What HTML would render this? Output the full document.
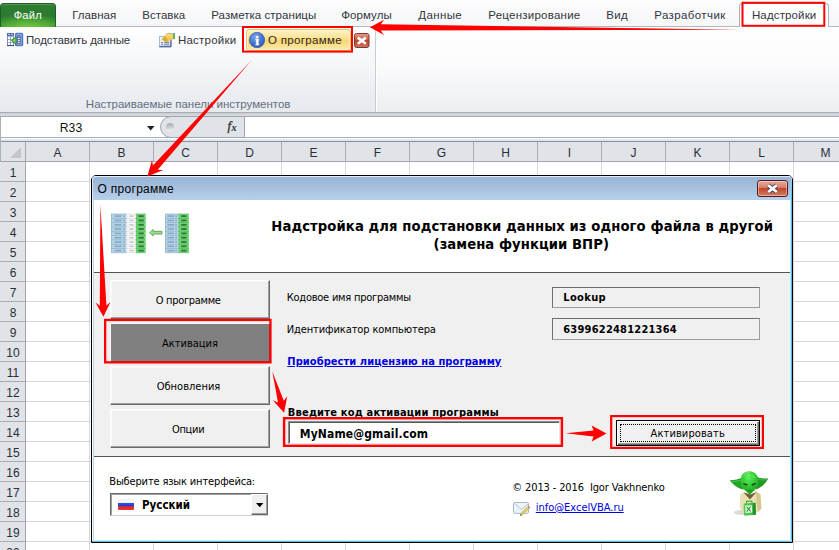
<!DOCTYPE html>
<html lang="ru"><head><meta charset="utf-8"><title>О программе</title><style>
*{box-sizing:border-box}
html,body{margin:0;padding:0}
body{width:839px;height:550px;overflow:hidden;background:#fff;position:relative;font-family:"Liberation Sans",sans-serif}
.a{position:absolute}
.t{position:absolute;white-space:pre;display:block}
.grp{position:absolute;left:0;top:0;width:0;height:0}
</style></head><body>
<div class="grp" id="grid">
<div class="a" style="left:0;top:141px;width:839px;height:1px;background:#8e9298"></div>
<div class="a" style="left:0;top:142px;width:839px;height:19px;background:#e0e3e7"></div>
<div class="a" style="left:0;top:161px;width:839px;height:1px;background:#a3a7ad"></div>
<div class="a" style="left:0;top:162px;width:25px;height:388px;background:#e0e3e7"></div>
<div class="a" style="left:25px;top:142px;width:1px;height:408px;background:#a3a7ad"></div>
<svg class="a" style="left:9px;top:147px" width="13" height="12" viewBox="0 0 13 12"><path d="M12 0v11H1z" fill="#c3c7cc"/></svg>
<div class="a" style="left:89px;top:142px;width:1px;height:19px;background:#a8acb2"></div>
<div class="a" style="left:89px;top:162px;width:1px;height:388px;background:#d5d7da"></div>
<span class="t" style='left:53.49px;top:145.00px;font:normal 12px/16px "Liberation Sans", sans-serif;color:#2a2f36;letter-spacing:0.000px;'>A</span>
<div class="a" style="left:153px;top:142px;width:1px;height:19px;background:#a8acb2"></div>
<div class="a" style="left:153px;top:162px;width:1px;height:388px;background:#d5d7da"></div>
<span class="t" style='left:117.49px;top:145.00px;font:normal 12px/16px "Liberation Sans", sans-serif;color:#2a2f36;letter-spacing:0.000px;'>B</span>
<div class="a" style="left:217px;top:142px;width:1px;height:19px;background:#a8acb2"></div>
<div class="a" style="left:217px;top:162px;width:1px;height:388px;background:#d5d7da"></div>
<span class="t" style='left:181.16px;top:145.00px;font:normal 12px/16px "Liberation Sans", sans-serif;color:#2a2f36;letter-spacing:0.000px;'>C</span>
<div class="a" style="left:281px;top:142px;width:1px;height:19px;background:#a8acb2"></div>
<div class="a" style="left:281px;top:162px;width:1px;height:388px;background:#d5d7da"></div>
<span class="t" style='left:245.16px;top:145.00px;font:normal 12px/16px "Liberation Sans", sans-serif;color:#2a2f36;letter-spacing:0.000px;'>D</span>
<div class="a" style="left:345px;top:142px;width:1px;height:19px;background:#a8acb2"></div>
<div class="a" style="left:345px;top:162px;width:1px;height:388px;background:#d5d7da"></div>
<span class="t" style='left:309.49px;top:145.00px;font:normal 12px/16px "Liberation Sans", sans-serif;color:#2a2f36;letter-spacing:0.000px;'>E</span>
<div class="a" style="left:409px;top:142px;width:1px;height:19px;background:#a8acb2"></div>
<div class="a" style="left:409px;top:162px;width:1px;height:388px;background:#d5d7da"></div>
<span class="t" style='left:373.83px;top:145.00px;font:normal 12px/16px "Liberation Sans", sans-serif;color:#2a2f36;letter-spacing:0.000px;'>F</span>
<div class="a" style="left:473px;top:142px;width:1px;height:19px;background:#a8acb2"></div>
<div class="a" style="left:473px;top:162px;width:1px;height:388px;background:#d5d7da"></div>
<span class="t" style='left:436.83px;top:145.00px;font:normal 12px/16px "Liberation Sans", sans-serif;color:#2a2f36;letter-spacing:0.000px;'>G</span>
<div class="a" style="left:537px;top:142px;width:1px;height:19px;background:#a8acb2"></div>
<div class="a" style="left:537px;top:162px;width:1px;height:388px;background:#d5d7da"></div>
<span class="t" style='left:501.16px;top:145.00px;font:normal 12px/16px "Liberation Sans", sans-serif;color:#2a2f36;letter-spacing:0.000px;'>H</span>
<div class="a" style="left:601px;top:142px;width:1px;height:19px;background:#a8acb2"></div>
<div class="a" style="left:601px;top:162px;width:1px;height:388px;background:#d5d7da"></div>
<span class="t" style='left:567.83px;top:145.00px;font:normal 12px/16px "Liberation Sans", sans-serif;color:#2a2f36;letter-spacing:0.000px;'>I</span>
<div class="a" style="left:665px;top:142px;width:1px;height:19px;background:#a8acb2"></div>
<div class="a" style="left:665px;top:162px;width:1px;height:388px;background:#d5d7da"></div>
<span class="t" style='left:630.50px;top:145.00px;font:normal 12px/16px "Liberation Sans", sans-serif;color:#2a2f36;letter-spacing:0.000px;'>J</span>
<div class="a" style="left:729px;top:142px;width:1px;height:19px;background:#a8acb2"></div>
<div class="a" style="left:729px;top:162px;width:1px;height:388px;background:#d5d7da"></div>
<span class="t" style='left:693.49px;top:145.00px;font:normal 12px/16px "Liberation Sans", sans-serif;color:#2a2f36;letter-spacing:0.000px;'>K</span>
<div class="a" style="left:793px;top:142px;width:1px;height:19px;background:#a8acb2"></div>
<div class="a" style="left:793px;top:162px;width:1px;height:388px;background:#d5d7da"></div>
<span class="t" style='left:758.16px;top:145.00px;font:normal 12px/16px "Liberation Sans", sans-serif;color:#2a2f36;letter-spacing:0.000px;'>L</span>
<div class="a" style="left:857px;top:142px;width:1px;height:19px;background:#a8acb2"></div>
<div class="a" style="left:857px;top:162px;width:1px;height:388px;background:#d5d7da"></div>
<span class="t" style='left:820.50px;top:145.00px;font:normal 12px/16px "Liberation Sans", sans-serif;color:#2a2f36;letter-spacing:0.000px;'>M</span>
<div class="a" style="left:26px;top:181px;width:813px;height:1px;background:#d5d7da"></div>
<div class="a" style="left:0;top:181px;width:25px;height:1px;background:#a8acb2"></div>
<span class="t" style='left:9.66px;top:165.00px;font:normal 12px/16px "Liberation Sans", sans-serif;color:#2a2f36;letter-spacing:0.000px;'>1</span>
<div class="a" style="left:26px;top:201px;width:813px;height:1px;background:#d5d7da"></div>
<div class="a" style="left:0;top:201px;width:25px;height:1px;background:#a8acb2"></div>
<span class="t" style='left:9.66px;top:185.00px;font:normal 12px/16px "Liberation Sans", sans-serif;color:#2a2f36;letter-spacing:0.000px;'>2</span>
<div class="a" style="left:26px;top:221px;width:813px;height:1px;background:#d5d7da"></div>
<div class="a" style="left:0;top:221px;width:25px;height:1px;background:#a8acb2"></div>
<span class="t" style='left:9.66px;top:205.00px;font:normal 12px/16px "Liberation Sans", sans-serif;color:#2a2f36;letter-spacing:0.000px;'>3</span>
<div class="a" style="left:26px;top:241px;width:813px;height:1px;background:#d5d7da"></div>
<div class="a" style="left:0;top:241px;width:25px;height:1px;background:#a8acb2"></div>
<span class="t" style='left:9.66px;top:225.00px;font:normal 12px/16px "Liberation Sans", sans-serif;color:#2a2f36;letter-spacing:0.000px;'>4</span>
<div class="a" style="left:26px;top:261px;width:813px;height:1px;background:#d5d7da"></div>
<div class="a" style="left:0;top:261px;width:25px;height:1px;background:#a8acb2"></div>
<span class="t" style='left:9.66px;top:245.00px;font:normal 12px/16px "Liberation Sans", sans-serif;color:#2a2f36;letter-spacing:0.000px;'>5</span>
<div class="a" style="left:26px;top:281px;width:813px;height:1px;background:#d5d7da"></div>
<div class="a" style="left:0;top:281px;width:25px;height:1px;background:#a8acb2"></div>
<span class="t" style='left:9.66px;top:265.00px;font:normal 12px/16px "Liberation Sans", sans-serif;color:#2a2f36;letter-spacing:0.000px;'>6</span>
<div class="a" style="left:26px;top:301px;width:813px;height:1px;background:#d5d7da"></div>
<div class="a" style="left:0;top:301px;width:25px;height:1px;background:#a8acb2"></div>
<span class="t" style='left:9.66px;top:285.00px;font:normal 12px/16px "Liberation Sans", sans-serif;color:#2a2f36;letter-spacing:0.000px;'>7</span>
<div class="a" style="left:26px;top:321px;width:813px;height:1px;background:#d5d7da"></div>
<div class="a" style="left:0;top:321px;width:25px;height:1px;background:#a8acb2"></div>
<span class="t" style='left:9.66px;top:305.00px;font:normal 12px/16px "Liberation Sans", sans-serif;color:#2a2f36;letter-spacing:0.000px;'>8</span>
<div class="a" style="left:26px;top:341px;width:813px;height:1px;background:#d5d7da"></div>
<div class="a" style="left:0;top:341px;width:25px;height:1px;background:#a8acb2"></div>
<span class="t" style='left:9.66px;top:325.00px;font:normal 12px/16px "Liberation Sans", sans-serif;color:#2a2f36;letter-spacing:0.000px;'>9</span>
<div class="a" style="left:26px;top:361px;width:813px;height:1px;background:#d5d7da"></div>
<div class="a" style="left:0;top:361px;width:25px;height:1px;background:#a8acb2"></div>
<span class="t" style='left:6.32px;top:345.00px;font:normal 12px/16px "Liberation Sans", sans-serif;color:#2a2f36;letter-spacing:0.000px;'>10</span>
<div class="a" style="left:26px;top:381px;width:813px;height:1px;background:#d5d7da"></div>
<div class="a" style="left:0;top:381px;width:25px;height:1px;background:#a8acb2"></div>
<span class="t" style='left:6.77px;top:365.00px;font:normal 12px/16px "Liberation Sans", sans-serif;color:#2a2f36;letter-spacing:0.000px;'>11</span>
<div class="a" style="left:26px;top:401px;width:813px;height:1px;background:#d5d7da"></div>
<div class="a" style="left:0;top:401px;width:25px;height:1px;background:#a8acb2"></div>
<span class="t" style='left:6.32px;top:385.00px;font:normal 12px/16px "Liberation Sans", sans-serif;color:#2a2f36;letter-spacing:0.000px;'>12</span>
<div class="a" style="left:26px;top:421px;width:813px;height:1px;background:#d5d7da"></div>
<div class="a" style="left:0;top:421px;width:25px;height:1px;background:#a8acb2"></div>
<span class="t" style='left:6.32px;top:405.00px;font:normal 12px/16px "Liberation Sans", sans-serif;color:#2a2f36;letter-spacing:0.000px;'>13</span>
<div class="a" style="left:26px;top:441px;width:813px;height:1px;background:#d5d7da"></div>
<div class="a" style="left:0;top:441px;width:25px;height:1px;background:#a8acb2"></div>
<span class="t" style='left:6.32px;top:425.00px;font:normal 12px/16px "Liberation Sans", sans-serif;color:#2a2f36;letter-spacing:0.000px;'>14</span>
<div class="a" style="left:26px;top:461px;width:813px;height:1px;background:#d5d7da"></div>
<div class="a" style="left:0;top:461px;width:25px;height:1px;background:#a8acb2"></div>
<span class="t" style='left:6.32px;top:445.00px;font:normal 12px/16px "Liberation Sans", sans-serif;color:#2a2f36;letter-spacing:0.000px;'>15</span>
<div class="a" style="left:26px;top:481px;width:813px;height:1px;background:#d5d7da"></div>
<div class="a" style="left:0;top:481px;width:25px;height:1px;background:#a8acb2"></div>
<span class="t" style='left:6.32px;top:465.00px;font:normal 12px/16px "Liberation Sans", sans-serif;color:#2a2f36;letter-spacing:0.000px;'>16</span>
<div class="a" style="left:26px;top:501px;width:813px;height:1px;background:#d5d7da"></div>
<div class="a" style="left:0;top:501px;width:25px;height:1px;background:#a8acb2"></div>
<span class="t" style='left:6.32px;top:485.00px;font:normal 12px/16px "Liberation Sans", sans-serif;color:#2a2f36;letter-spacing:0.000px;'>17</span>
<div class="a" style="left:26px;top:521px;width:813px;height:1px;background:#d5d7da"></div>
<div class="a" style="left:0;top:521px;width:25px;height:1px;background:#a8acb2"></div>
<span class="t" style='left:6.32px;top:505.00px;font:normal 12px/16px "Liberation Sans", sans-serif;color:#2a2f36;letter-spacing:0.000px;'>18</span>
<div class="a" style="left:26px;top:541px;width:813px;height:1px;background:#d5d7da"></div>
<div class="a" style="left:0;top:541px;width:25px;height:1px;background:#a8acb2"></div>
<span class="t" style='left:6.32px;top:525.00px;font:normal 12px/16px "Liberation Sans", sans-serif;color:#2a2f36;letter-spacing:0.000px;'>19</span>
<div class="a" style="left:26px;top:561px;width:813px;height:1px;background:#d5d7da"></div>
<div class="a" style="left:0;top:561px;width:25px;height:1px;background:#a8acb2"></div>
<span class="t" style='left:6.32px;top:545.00px;font:normal 12px/16px "Liberation Sans", sans-serif;color:#2a2f36;letter-spacing:0.000px;'>20</span>
</div>
<div class="grp" id="ribbon">
<div class="a" style="left:0;top:0;width:839px;height:27px;background:linear-gradient(#fcfcfd,#f5f6f8)"></div>
<div class="a" style="left:0;top:27px;width:839px;height:85px;background:linear-gradient(#ffffff 0%,#fbfbfc 45%,#eceef1 100%)"></div>
<div class="a" style="left:0;top:27px;width:376px;height:85px;background:linear-gradient(rgba(230,233,238,0) 0%,rgba(226,230,236,.55) 100%);border-right:1px solid #c9cdd3"></div>
<div class="a" style="left:376px;top:29px;width:1px;height:82px;background:#fff"></div>
<div class="a" style="left:0;top:26px;width:839px;height:1px;background:#b3b8be"></div>
<div class="a" style="left:0;top:112px;width:839px;height:1px;background:#a9adb3"></div>
<div class="a" style="left:0;top:113px;width:839px;height:3px;background:linear-gradient(#c9ccd1,#d9dce0)"></div>
<div class="a" style="left:0;top:3px;width:56px;height:24px;border:1px solid #1e5d24;border-bottom:none;border-radius:4px 4px 0 0;background:radial-gradient(ellipse 75% 70% at 50% 112%,#74cf3e 0%,rgba(110,200,60,.75) 40%,rgba(90,180,50,0) 100%),linear-gradient(#2f8033 0%,#2b7a2f 50%,#35902f 100%);box-shadow:inset 0 1px 0 rgba(255,255,255,.18)"></div>
<span class="t" style='left:13.67px;top:7.00px;font:normal 11.2px/16px "Liberation Sans", sans-serif;color:#fff;letter-spacing:0.180px;'>Файл</span>
<span class="t" style='left:72.25px;top:7.00px;font:normal 11.5px/16px "Liberation Sans", sans-serif;color:#33363d;letter-spacing:0.036px;'>Главная</span>
<span class="t" style='left:142.25px;top:7.00px;font:normal 11.5px/16px "Liberation Sans", sans-serif;color:#33363d;letter-spacing:0.041px;'>Вставка</span>
<span class="t" style='left:211.25px;top:7.00px;font:normal 11.5px/16px "Liberation Sans", sans-serif;color:#33363d;letter-spacing:0.042px;'>Разметка страницы</span>
<span class="t" style='left:341.25px;top:7.00px;font:normal 11.5px/16px "Liberation Sans", sans-serif;color:#33363d;letter-spacing:0.075px;'>Формулы</span>
<span class="t" style='left:418.25px;top:7.00px;font:normal 11.5px/16px "Liberation Sans", sans-serif;color:#33363d;letter-spacing:0.386px;'>Данные</span>
<span class="t" style='left:488.25px;top:7.00px;font:normal 11.5px/16px "Liberation Sans", sans-serif;color:#33363d;letter-spacing:0.245px;'>Рецензирование</span>
<span class="t" style='left:606.25px;top:7.00px;font:normal 11.5px/16px "Liberation Sans", sans-serif;color:#33363d;letter-spacing:0.341px;'>Вид</span>
<span class="t" style='left:654.25px;top:7.00px;font:normal 11.5px/16px "Liberation Sans", sans-serif;color:#33363d;letter-spacing:0.392px;'>Разработчик</span>
<div class="a" style="left:739px;top:3px;width:90px;height:24px;border:1px solid #aab0b8;border-bottom:none;border-radius:4px 4px 0 0;background:#fff"></div>
<span class="t" style='left:751.95px;top:7.00px;font:normal 11.5px/16px "Liberation Sans", sans-serif;color:#33363d;letter-spacing:0.132px;'>Надстройки</span>
<span class="t" style='left:25.95px;top:32.00px;font:normal 11.5px/16px "Liberation Sans", sans-serif;color:#33363d;letter-spacing:-0.098px;'>Подставить данные</span>
<span class="t" style='left:177.95px;top:32.00px;font:normal 11.5px/16px "Liberation Sans", sans-serif;color:#33363d;letter-spacing:0.238px;'>Настройки</span>
<div class="a" style="left:246px;top:29px;width:104.500px;height:21.500px;border:1px solid #e9c35c;border-radius:3px;background:linear-gradient(#fdf2c6 0%,#fce397 38%,#fbd66e 55%,#fdebac 100%);box-shadow:inset 0 0 0 1px rgba(255,250,220,.7)"></div>
<span class="t" style='left:267.95px;top:32.00px;font:normal 11.5px/16px "Liberation Sans", sans-serif;color:#2b2b2b;letter-spacing:0.344px;'>О программе</span>
<span class="t" style='left:85.85px;top:96.00px;font:normal 11.5px/16px "Liberation Sans", sans-serif;color:#646e80;letter-spacing:-0.005px;'>Настраиваемые панели инструментов</span>
<svg class="a" style="left:6px;top:32px" width="18" height="15" viewBox="0 0 18 15">
<rect x="1" y="1" width="7" height="13" fill="#7b90ba"/>
<rect x="1" y="1" width="7" height="2.800" fill="#4d6aa8"/>
<rect x="1" y="13.200" width="7" height=".9" fill="#2d4573"/>
<path d="M2 2.400h2M5 2.400h2" stroke="#c3d0ea" stroke-width="1"/>
<g fill="#fff"><rect x="2" y="4.600" width="2.200" height="2.300"/><rect x="5" y="4.600" width="2.200" height="2.300"/><rect x="2" y="7.700" width="2.200" height="2.300"/><rect x="5" y="7.700" width="2.200" height="2.300"/><rect x="2" y="10.700" width="2.200" height="2.200"/><rect x="5" y="10.700" width="2.200" height="2.200"/></g>
<rect x="9.400" y="1.200" width="7.400" height="12.600" rx=".8" fill="#3f70d8" stroke="#2c58b8" stroke-width=".6"/>
<rect x="10.600" y="2.200" width="5" height="10.600" fill="#a6bff0"/>
<rect x="11.400" y="3.200" width="3.200" height="9" fill="#414f69"/>
<path d="M12 4.300h2" stroke="#8ea4d4" stroke-width="1"/>
<path d="M12 6.500h2M12 8.600h2M12 10.700h2" stroke="#d3e2ff" stroke-width="1.300"/>
<path d="M5.300 8.400l4.800-3.700v7.800z" fill="#52ad48" stroke="#2f7f2c" stroke-width=".7" stroke-linejoin="round"/>
<path d="M7 8.400l2.300-1.800v3.700z" fill="#8fd880"/>
</svg>
<svg class="a" style="left:158px;top:32px" width="18" height="16" viewBox="0 0 18 16">
<defs><linearGradient id="gd" x1="0" y1="0" x2="1" y2="1"><stop offset="0" stop-color="#f3f7ff"/><stop offset="1" stop-color="#c4d6f6"/></linearGradient>
<linearGradient id="gh" x1="0" y1="0" x2="0" y2="1"><stop offset="0" stop-color="#fbe596"/><stop offset="1" stop-color="#eeb21f"/></linearGradient></defs>
<rect x="1.500" y="4.400" width="11.200" height="10.200" fill="url(#gd)" stroke="#9fb4da" stroke-width=".9"/>
<path d="M1.300 14.800h11.700v-10" fill="none" stroke="#324c7c" stroke-width="1"/>
<path d="M3.200 10.600h1.800M6.200 10.600h4.800M3.200 12.700h1.800M6.200 12.700h4.800" stroke="#7383a4" stroke-width="1.100"/>
<path d="M3.600 7.600l3.200-4.600 3.800-1.600 4.600.7v5l-2.400 1.400-1.500-.6-2 2.600z" fill="url(#gh)"/>
<path d="M3.800 7.600l2.900-4.200 3 4.400-1.900 2.200z" fill="#c79612" opacity=".55"/>
<path d="M8 2.300l2.600-1 4.400.7" fill="none" stroke="#9b8a66" stroke-width=".7"/>
<path d="M15.100 1.300l1.700-.3v6.600l-1.700-.9z" fill="#43a843"/>
</svg>
<svg class="a" style="left:248px;top:31px" width="18" height="18" viewBox="0 0 18 18">
<defs><radialGradient id="gi" cx=".4" cy=".3" r=".8"><stop offset="0" stop-color="#7fa6e8"/><stop offset=".6" stop-color="#3f6fce"/><stop offset="1" stop-color="#2a52ad"/></radialGradient></defs>
<circle cx="9" cy="9" r="7.700" fill="url(#gi)" stroke="#3156a8" stroke-width=".6"/>
<text x="9.100" y="13.500" text-anchor="middle" font-family="Liberation Serif,serif" font-weight="bold" font-size="13.500" fill="#fff" stroke="#fff" stroke-width=".45">i</text>
</svg>
<svg class="a" style="left:354px;top:33px" width="16" height="15" viewBox="0 0 16 15">
<defs><linearGradient id="gc" x1="0" y1="0" x2="0" y2="1"><stop offset="0" stop-color="#e0a090"/><stop offset=".45" stop-color="#c95843"/><stop offset=".55" stop-color="#bd3f2b"/><stop offset="1" stop-color="#d07a64"/></linearGradient></defs>
<rect x=".5" y=".5" width="14.500" height="14" rx="2" fill="url(#gc)" stroke="#7c3a30" stroke-width="1"/>
<path d="M3.800 4.600l8 6.200M11.800 4.600l-8 6.200" stroke="#fff" stroke-width="2.700" stroke-linecap="butt"/>
</svg>
</div>
<div class="grp" id="formulabar">
<div class="a" style="left:0;top:116px;width:839px;height:1px;background:#a3a8ae"></div>
<div class="a" style="left:0;top:117px;width:839px;height:20px;background:#fff"></div>
<div class="a" style="left:0;top:137px;width:839px;height:1px;background:#a9aeb5"></div>
<div class="a" style="left:0;top:138px;width:839px;height:3px;background:linear-gradient(#ffffff 0%,#fbfcfe 30%,#dde2f2 60%,#dde2f2 100%)"></div>
<div class="a" style="left:0;top:117px;width:1px;height:44px;background:#aab0b8"></div>
<div class="a" style="left:160px;top:116px;width:85px;height:22px;background:#e0e3e7;border:1px solid #a0a6ae;border-radius:11px 0 0 11px"></div>
<div class="a" style="left:166px;top:122.700px;width:8.200px;height:8.200px;border-radius:50%;background:linear-gradient(#a9adb3 0%,#c3c6cb 45%,#eef0f2 100%)"></div>
<svg class="a" style="left:147px;top:126px" width="8" height="5" viewBox="0 0 8 5"><path d="M0 0h7.500l-3.750 4.500z" fill="#222"/></svg>
<span class="t" style='left:59.71px;top:120.00px;font:normal 12.2px/16px "Liberation Sans", sans-serif;color:#111;letter-spacing:0.113px;'>R33</span>
<span class="t" style='left:227.60px;top:117.71px;font:italic 12.6px/16px "Liberation Serif", serif;color:#2b2b2b;letter-spacing:0.000px;-webkit-text-stroke:.3px #2b2b2b;'>f</span>
<span class="t" style='left:231.60px;top:120.21px;font:italic bold 10.2px/16px "Liberation Serif", serif;color:#2b2b2b;letter-spacing:0.000px;'>x</span>
</div>
<div class="grp" id="dialog">
<div class="a" style="left:91px;top:175px;width:702px;height:368px;border:1px solid #000;border-radius:5px 5px 0 0;background:#fff;overflow:hidden"></div>
<div class="a" style="left:92px;top:176px;width:700px;height:24px;border-radius:4px 4px 0 0;background:linear-gradient(#98b3d4 0%,#a3bddc 40%,#b7d0eb 100%);box-shadow:inset 0 1px 0 rgba(255,255,255,.75), inset 1px 0 0 rgba(255,255,255,.6)"></div>
<span class="t" style='left:97.62px;top:181.00px;font:normal 12px/16px "Liberation Sans", sans-serif;color:#000;letter-spacing:0.274px;'>О программе</span>
<div class="a" style="left:93px;top:200px;width:1px;height:341px;background:#bcd5ee"></div>
<div class="a" style="left:790px;top:200px;width:1px;height:341px;background:#d5dcf0"></div>
<div class="a" style="left:791px;top:180px;width:1px;height:362px;background:linear-gradient(#8fd4f0,#3fc6ee 20px)"></div>
<div class="a" style="left:92px;top:540px;width:700px;height:1px;background:#dfe5f4"></div>
<div class="a" style="left:92px;top:541px;width:700px;height:1px;background:#3fc6ee"></div>
<svg class="a" style="left:757px;top:180px" width="32" height="18" viewBox="0 0 32 18">
<defs><linearGradient id="gx" x1="0" y1="0" x2="0" y2="1"><stop offset="0" stop-color="#eab0a2"/><stop offset=".47" stop-color="#d67b68"/><stop offset=".5" stop-color="#c2472c"/><stop offset="1" stop-color="#d68062"/></linearGradient></defs>
<rect x=".5" y=".5" width="30" height="16" rx="2.500" fill="url(#gx)" stroke="#4e1c22" stroke-width="1"/>
<rect x="1.500" y="1.500" width="28" height="14" rx="1.800" fill="none" stroke="rgba(255,225,215,.5)" stroke-width="1"/>
<path d="M11.200 5.200l8.600 6.800M19.800 5.200l-8.600 6.800" stroke="#4b4656" stroke-width="4.300" stroke-linecap="butt"/>
<path d="M11.200 5.200l8.600 6.800M19.800 5.200l-8.600 6.800" stroke="#fff" stroke-width="2.700" stroke-linecap="butt"/>
</svg>
<svg class="a" style="left:108px;top:210px" width="86" height="48" viewBox="108 210 86 48"><rect x="111" y="214" width="15.6" height="38.79" fill="#b7d3e6"/><rect x="111" y="213.65" width="15.6" height=".7" fill="#8fb3cc"/><rect x="111" y="217.96" width="15.6" height=".7" fill="#8fb3cc"/><rect x="111" y="222.27" width="15.6" height=".7" fill="#8fb3cc"/><rect x="111" y="226.58" width="15.6" height=".7" fill="#8fb3cc"/><rect x="111" y="230.89" width="15.6" height=".7" fill="#8fb3cc"/><rect x="111" y="235.20" width="15.6" height=".7" fill="#8fb3cc"/><rect x="111" y="239.51" width="15.6" height=".7" fill="#8fb3cc"/><rect x="111" y="243.82" width="15.6" height=".7" fill="#8fb3cc"/><rect x="111" y="248.13" width="15.6" height=".7" fill="#8fb3cc"/><rect x="111" y="252.44" width="15.6" height=".7" fill="#8fb3cc"/><rect x="111" y="214" width=".6" height="38.79" fill="#8fb3cc"/><rect x="126.6" y="214" width="9.3" height="38.79" fill="#f8f8f9"/><rect x="126.6" y="213.65" width="9.3" height=".7" fill="#dcdde2"/><rect x="126.6" y="217.96" width="9.3" height=".7" fill="#dcdde2"/><rect x="126.6" y="222.27" width="9.3" height=".7" fill="#dcdde2"/><rect x="126.6" y="226.58" width="9.3" height=".7" fill="#dcdde2"/><rect x="126.6" y="230.89" width="9.3" height=".7" fill="#dcdde2"/><rect x="126.6" y="235.20" width="9.3" height=".7" fill="#dcdde2"/><rect x="126.6" y="239.51" width="9.3" height=".7" fill="#dcdde2"/><rect x="126.6" y="243.82" width="9.3" height=".7" fill="#dcdde2"/><rect x="126.6" y="248.13" width="9.3" height=".7" fill="#dcdde2"/><rect x="126.6" y="252.44" width="9.3" height=".7" fill="#dcdde2"/><rect x="126.6" y="214" width=".6" height="38.79" fill="#dcdde2"/><rect x="135.9" y="214" width="9.8" height="38.79" fill="#6fd676"/><rect x="135.9" y="213.65" width="9.8" height=".7" fill="#58bd60"/><rect x="135.9" y="217.96" width="9.8" height=".7" fill="#58bd60"/><rect x="135.9" y="222.27" width="9.8" height=".7" fill="#58bd60"/><rect x="135.9" y="226.58" width="9.8" height=".7" fill="#58bd60"/><rect x="135.9" y="230.89" width="9.8" height=".7" fill="#58bd60"/><rect x="135.9" y="235.20" width="9.8" height=".7" fill="#58bd60"/><rect x="135.9" y="239.51" width="9.8" height=".7" fill="#58bd60"/><rect x="135.9" y="243.82" width="9.8" height=".7" fill="#58bd60"/><rect x="135.9" y="248.13" width="9.8" height=".7" fill="#58bd60"/><rect x="135.9" y="252.44" width="9.8" height=".7" fill="#58bd60"/><rect x="135.9" y="214" width=".6" height="38.79" fill="#58bd60"/><rect x="165" y="214" width="13.7" height="38.79" fill="#b7d3e6"/><rect x="165" y="213.65" width="13.7" height=".7" fill="#8fb3cc"/><rect x="165" y="217.96" width="13.7" height=".7" fill="#8fb3cc"/><rect x="165" y="222.27" width="13.7" height=".7" fill="#8fb3cc"/><rect x="165" y="226.58" width="13.7" height=".7" fill="#8fb3cc"/><rect x="165" y="230.89" width="13.7" height=".7" fill="#8fb3cc"/><rect x="165" y="235.20" width="13.7" height=".7" fill="#8fb3cc"/><rect x="165" y="239.51" width="13.7" height=".7" fill="#8fb3cc"/><rect x="165" y="243.82" width="13.7" height=".7" fill="#8fb3cc"/><rect x="165" y="248.13" width="13.7" height=".7" fill="#8fb3cc"/><rect x="165" y="252.44" width="13.7" height=".7" fill="#8fb3cc"/><rect x="165" y="214" width=".6" height="38.79" fill="#8fb3cc"/><rect x="178.7" y="214" width="10.2" height="38.79" fill="#6fd676"/><rect x="178.7" y="213.65" width="10.2" height=".7" fill="#58bd60"/><rect x="178.7" y="217.96" width="10.2" height=".7" fill="#58bd60"/><rect x="178.7" y="222.27" width="10.2" height=".7" fill="#58bd60"/><rect x="178.7" y="226.58" width="10.2" height=".7" fill="#58bd60"/><rect x="178.7" y="230.89" width="10.2" height=".7" fill="#58bd60"/><rect x="178.7" y="235.20" width="10.2" height=".7" fill="#58bd60"/><rect x="178.7" y="239.51" width="10.2" height=".7" fill="#58bd60"/><rect x="178.7" y="243.82" width="10.2" height=".7" fill="#58bd60"/><rect x="178.7" y="248.13" width="10.2" height=".7" fill="#58bd60"/><rect x="178.7" y="252.44" width="10.2" height=".7" fill="#58bd60"/><rect x="178.7" y="214" width=".6" height="38.79" fill="#58bd60"/><rect x="114.500" y="215.35" width="7" height="1.600" fill="#5d88a8" opacity=".55"/><rect x="123.300" y="215.35" width="1.600" height="1.600" fill="#5d88a8" opacity=".55"/><rect x="129.300" y="215.35" width="4.400" height="1.600" fill="#9b9ca6" opacity=".5"/><rect x="138.400" y="215.25" width="5.400" height="1.800" fill="#0b3a10" opacity=".62"/><rect x="167.500" y="215.35" width="6.500" height="1.600" fill="#5d88a8" opacity=".55"/><rect x="175.300" y="215.35" width="1.600" height="1.600" fill="#5d88a8" opacity=".55"/><rect x="181.200" y="215.25" width="5.400" height="1.800" fill="#0b3a10" opacity=".62"/><rect x="114.500" y="219.66" width="7" height="1.600" fill="#5d88a8" opacity=".55"/><rect x="123.300" y="219.66" width="1.600" height="1.600" fill="#5d88a8" opacity=".55"/><rect x="129.300" y="219.66" width="4.400" height="1.600" fill="#9b9ca6" opacity=".5"/><rect x="138.400" y="219.56" width="5.400" height="1.800" fill="#0b3a10" opacity=".62"/><rect x="167.500" y="219.66" width="6.500" height="1.600" fill="#5d88a8" opacity=".55"/><rect x="175.300" y="219.66" width="1.600" height="1.600" fill="#5d88a8" opacity=".55"/><rect x="181.200" y="219.56" width="5.400" height="1.800" fill="#0b3a10" opacity=".62"/><rect x="114.500" y="223.97" width="7" height="1.600" fill="#5d88a8" opacity=".55"/><rect x="123.300" y="223.97" width="1.600" height="1.600" fill="#5d88a8" opacity=".55"/><rect x="129.300" y="223.97" width="4.400" height="1.600" fill="#9b9ca6" opacity=".5"/><rect x="138.400" y="223.87" width="5.400" height="1.800" fill="#0b3a10" opacity=".62"/><rect x="167.500" y="223.97" width="6.500" height="1.600" fill="#5d88a8" opacity=".55"/><rect x="175.300" y="223.97" width="1.600" height="1.600" fill="#5d88a8" opacity=".55"/><rect x="181.200" y="223.87" width="5.400" height="1.800" fill="#0b3a10" opacity=".62"/><rect x="114.500" y="228.28" width="7" height="1.600" fill="#5d88a8" opacity=".55"/><rect x="123.300" y="228.28" width="1.600" height="1.600" fill="#5d88a8" opacity=".55"/><rect x="129.300" y="228.28" width="4.400" height="1.600" fill="#9b9ca6" opacity=".5"/><rect x="138.400" y="228.18" width="5.400" height="1.800" fill="#0b3a10" opacity=".62"/><rect x="167.500" y="228.28" width="6.500" height="1.600" fill="#5d88a8" opacity=".55"/><rect x="175.300" y="228.28" width="1.600" height="1.600" fill="#5d88a8" opacity=".55"/><rect x="181.200" y="228.18" width="5.400" height="1.800" fill="#0b3a10" opacity=".62"/><rect x="114.500" y="232.59" width="7" height="1.600" fill="#5d88a8" opacity=".55"/><rect x="123.300" y="232.59" width="1.600" height="1.600" fill="#5d88a8" opacity=".55"/><rect x="129.300" y="232.59" width="4.400" height="1.600" fill="#9b9ca6" opacity=".5"/><rect x="138.400" y="232.49" width="5.400" height="1.800" fill="#0b3a10" opacity=".62"/><rect x="167.500" y="232.59" width="6.500" height="1.600" fill="#5d88a8" opacity=".55"/><rect x="175.300" y="232.59" width="1.600" height="1.600" fill="#5d88a8" opacity=".55"/><rect x="181.200" y="232.49" width="5.400" height="1.800" fill="#0b3a10" opacity=".62"/><rect x="114.500" y="236.90" width="7" height="1.600" fill="#5d88a8" opacity=".55"/><rect x="123.300" y="236.90" width="1.600" height="1.600" fill="#5d88a8" opacity=".55"/><rect x="129.300" y="236.90" width="4.400" height="1.600" fill="#9b9ca6" opacity=".5"/><rect x="138.400" y="236.80" width="5.400" height="1.800" fill="#0b3a10" opacity=".62"/><rect x="167.500" y="236.90" width="6.500" height="1.600" fill="#5d88a8" opacity=".55"/><rect x="175.300" y="236.90" width="1.600" height="1.600" fill="#5d88a8" opacity=".55"/><rect x="181.200" y="236.80" width="5.400" height="1.800" fill="#0b3a10" opacity=".62"/><rect x="114.500" y="241.21" width="7" height="1.600" fill="#5d88a8" opacity=".55"/><rect x="123.300" y="241.21" width="1.600" height="1.600" fill="#5d88a8" opacity=".55"/><rect x="129.300" y="241.21" width="4.400" height="1.600" fill="#9b9ca6" opacity=".5"/><rect x="138.400" y="241.11" width="5.400" height="1.800" fill="#0b3a10" opacity=".62"/><rect x="167.500" y="241.21" width="6.500" height="1.600" fill="#5d88a8" opacity=".55"/><rect x="175.300" y="241.21" width="1.600" height="1.600" fill="#5d88a8" opacity=".55"/><rect x="181.200" y="241.11" width="5.400" height="1.800" fill="#0b3a10" opacity=".62"/><rect x="114.500" y="245.52" width="7" height="1.600" fill="#5d88a8" opacity=".55"/><rect x="123.300" y="245.52" width="1.600" height="1.600" fill="#5d88a8" opacity=".55"/><rect x="129.300" y="245.52" width="4.400" height="1.600" fill="#9b9ca6" opacity=".5"/><rect x="138.400" y="245.42" width="5.400" height="1.800" fill="#0b3a10" opacity=".62"/><rect x="167.500" y="245.52" width="6.500" height="1.600" fill="#5d88a8" opacity=".55"/><rect x="175.300" y="245.52" width="1.600" height="1.600" fill="#5d88a8" opacity=".55"/><rect x="181.200" y="245.42" width="5.400" height="1.800" fill="#0b3a10" opacity=".62"/><rect x="114.500" y="249.83" width="7" height="1.600" fill="#5d88a8" opacity=".55"/><rect x="123.300" y="249.83" width="1.600" height="1.600" fill="#5d88a8" opacity=".55"/><rect x="129.300" y="249.83" width="4.400" height="1.600" fill="#9b9ca6" opacity=".5"/><rect x="138.400" y="249.73" width="5.400" height="1.800" fill="#0b3a10" opacity=".62"/><rect x="167.500" y="249.83" width="6.500" height="1.600" fill="#5d88a8" opacity=".55"/><rect x="175.300" y="249.83" width="1.600" height="1.600" fill="#5d88a8" opacity=".55"/><rect x="181.200" y="249.73" width="5.400" height="1.800" fill="#0b3a10" opacity=".62"/><path d="M149.600 232.700l3.500-3.300v1.900h8.900v2.800h-8.900v1.900z" fill="#9fdb8c" stroke="#3f8f38" stroke-width=".7"/></svg>
<span class="t" style='left:271.25px;top:218.00px;font:bold 14.67px/16px "DejaVu Sans Condensed", "DejaVu Sans", "Liberation Sans", sans-serif;color:#000;letter-spacing:0.102px;font-stretch:condensed;'>Надстройка для подстановки данных из одного файла в другой</span>
<span class="t" style='left:433.55px;top:236.00px;font:bold 14.67px/16px "DejaVu Sans Condensed", "DejaVu Sans", "Liberation Sans", sans-serif;color:#000;letter-spacing:0.060px;font-stretch:condensed;'>(замена функции ВПР)</span>
<div class="a" style="left:94px;top:272px;width:696px;height:185px;background:#f0f0f0;border-top:1px solid #555;border-bottom:1px solid #555"></div>
<div class="a" style="left:110px;top:280px;width:160px;height:39px;background:#f0f0f0;border:1px solid;border-color:#fff #696969 #696969 #fff;box-shadow:inset -1px -1px 0 #a0a0a0, inset 1px 1px 0 #f8f8f8"></div><span class="t" style='left:155.69px;top:293.00px;font:normal 11px/16px "DejaVu Sans Condensed", "DejaVu Sans", "Liberation Sans", sans-serif;color:#000;letter-spacing:-0.308px;font-stretch:condensed;'>О программе</span>
<div class="a" style="left:110px;top:323px;width:160px;height:39px;background:#808080;border:1px solid;border-color:#fafafa #5c5c5c #5c5c5c #fafafa"></div><span class="t" style='left:161.98px;top:336.00px;font:normal 11px/16px "DejaVu Sans Condensed", "DejaVu Sans", "Liberation Sans", sans-serif;color:#000;letter-spacing:-0.003px;font-stretch:condensed;'>Активация</span>
<div class="a" style="left:110px;top:366px;width:160px;height:39px;background:#f0f0f0;border:1px solid;border-color:#fff #696969 #696969 #fff;box-shadow:inset -1px -1px 0 #a0a0a0, inset 1px 1px 0 #f8f8f8"></div><span class="t" style='left:156.69px;top:379.00px;font:normal 11px/16px "DejaVu Sans Condensed", "DejaVu Sans", "Liberation Sans", sans-serif;color:#000;letter-spacing:0.011px;font-stretch:condensed;'>Обновления</span>
<div class="a" style="left:110px;top:409px;width:160px;height:39px;background:#f0f0f0;border:1px solid;border-color:#fff #696969 #696969 #fff;box-shadow:inset -1px -1px 0 #a0a0a0, inset 1px 1px 0 #f8f8f8"></div><span class="t" style='left:171.88px;top:422.00px;font:normal 11px/16px "DejaVu Sans Condensed", "DejaVu Sans", "Liberation Sans", sans-serif;color:#000;letter-spacing:-0.257px;font-stretch:condensed;'>Опции</span>
<span class="t" style='left:286.69px;top:290.00px;font:normal 11px/16px "DejaVu Sans Condensed", "DejaVu Sans", "Liberation Sans", sans-serif;color:#000;letter-spacing:-0.238px;font-stretch:condensed;'>Кодовое имя программы</span>
<span class="t" style='left:286.69px;top:322.00px;font:normal 11px/16px "DejaVu Sans Condensed", "DejaVu Sans", "Liberation Sans", sans-serif;color:#000;letter-spacing:-0.099px;font-stretch:condensed;'>Идентификатор компьютера</span>
<span class="t" style='left:287.29px;top:354.00px;font:bold 11px/16px "DejaVu Sans Condensed", "DejaVu Sans", "Liberation Sans", sans-serif;color:#0000e0;letter-spacing:0.070px;text-decoration:underline;font-stretch:condensed;'>Приобрести лицензию на программу</span>
<div class="a" style="left:552px;top:287px;width:208px;height:21px;background:#f0f0f0;border:1px solid;border-color:#6f6f6f #9d9d9d #9d9d9d #6f6f6f"></div>
<div class="a" style="left:552px;top:318px;width:208px;height:22px;background:#f0f0f0;border:1px solid;border-color:#6f6f6f #9d9d9d #9d9d9d #6f6f6f"></div>
<span class="t" style='left:563.28px;top:290.00px;font:bold 11px/16px "DejaVu Sans Condensed", "DejaVu Sans", "Liberation Sans", sans-serif;color:#000;letter-spacing:0.361px;font-stretch:condensed;'>Lookup</span>
<span class="t" style='left:563.28px;top:322.00px;font:bold 11px/16px "DejaVu Sans Condensed", "DejaVu Sans", "Liberation Sans", sans-serif;color:#000;letter-spacing:0.217px;font-stretch:condensed;'>6399622481221364</span>
<span class="t" style='left:287.79px;top:405.00px;font:bold 11px/16px "DejaVu Sans Condensed", "DejaVu Sans", "Liberation Sans", sans-serif;color:#000;letter-spacing:0.207px;font-stretch:condensed;'>Введите код активации программы</span>
<div class="a" style="left:288px;top:421px;width:272px;height:23px;background:#fff;border:1px solid;border-color:#8c8c8c #e6e6e6 #e6e6e6 #8c8c8c;box-shadow:inset 1px 1px 0 #5a5a5a"></div>
<span class="t" style='left:299.82px;top:426.00px;font:bold 12px/16px "DejaVu Sans Condensed", "DejaVu Sans", "Liberation Sans", sans-serif;color:#000;letter-spacing:0.130px;font-stretch:condensed;'>MyName@gmail.com</span>
<div class="a" style="left:616px;top:420px;width:144px;height:26px;background:#f0f0f0;border:1px solid #000;box-shadow:inset 1px 1px 0 #fff, inset -1px -1px 0 #696969, inset -2px -2px 0 #a0a0a0"></div>
<div class="a" style="left:620px;top:424px;width:136px;height:18px;border:1px dotted #000"></div>
<span class="t" style='left:650.58px;top:426.00px;font:normal 11px/16px "DejaVu Sans Condensed", "DejaVu Sans", "Liberation Sans", sans-serif;color:#000;letter-spacing:0.100px;font-stretch:condensed;'>Активировать</span>
<span class="t" style='left:109.28px;top:474.00px;font:normal 11px/16px "DejaVu Sans Condensed", "DejaVu Sans", "Liberation Sans", sans-serif;color:#000;letter-spacing:-0.149px;font-stretch:condensed;'>Выберите язык интерфейса:</span>
<div class="a" style="left:110px;top:493px;width:158px;height:23px;background:#fff;border:1px solid;border-color:#6b6b6b #d0d0d0 #d0d0d0 #6b6b6b;box-shadow:inset 1px 1px 0 #a0a0a0"></div>
<div class="a" style="left:251px;top:494px;width:17px;height:21px;background:#f0f0f0;border:1px solid;border-color:#fff #696969 #696969 #fff;box-shadow:inset -1px -1px 0 #a0a0a0"></div>
<svg class="a" style="left:256px;top:503px" width="8" height="5" viewBox="0 0 8 5"><path d="M0 0h7.400l-3.700 4.300z" fill="#000"/></svg>
<div class="a" style="left:118px;top:499px;width:16px;height:11px;background:linear-gradient(#e9e9ee 0%,#fbfbfd 12%,#eeeef6 33%,#3a50dc 38%,#2438cc 64%,#e22a2a 70%,#ea3434 100%);border-radius:1px"></div>
<span class="t" style='left:141.95px;top:496.50px;font:bold 11.5px/16px "DejaVu Sans Condensed", "DejaVu Sans", "Liberation Sans", sans-serif;color:#000;letter-spacing:0.012px;font-stretch:condensed;'>Русский</span>
<span class="t" style='left:512.28px;top:480.00px;font:normal 11px/16px "DejaVu Sans Condensed", "DejaVu Sans", "Liberation Sans", sans-serif;color:#000;letter-spacing:-0.128px;font-stretch:condensed;'>&copy; 2013 - 2016&nbsp; Igor Vakhnenko</span>
<span class="t" style='left:535.78px;top:500.00px;font:normal 11px/16px "DejaVu Sans Condensed", "DejaVu Sans", "Liberation Sans", sans-serif;color:#0000e0;letter-spacing:-0.022px;text-decoration:underline;font-stretch:condensed;'>info@ExcelVBA.ru</span>
<svg class="a" style="left:512px;top:501px" width="19" height="16" viewBox="512 501 19 16">
<rect x="513.500" y="502.500" width="15" height="10.800" rx=".8" fill="#eef5f8" stroke="#a9bac6" stroke-width="1"/>
<path d="M514.500 503.500l7 6 6.500-5.600" fill="none" stroke="#b4b0c0" stroke-width=".8"/>
<path d="M514.500 512.500l4.500-4.500M528 512.500l-4.200-4.300" fill="none" stroke="#d5e0e6" stroke-width=".7"/>
<path d="M520.300 515.600l1-2.600 6.400-6.300 1.500 1.500-6.300 6.400z" fill="#ead95e" stroke="#8f8340" stroke-width=".5"/>
<path d="M527.700 506.700l1-1 1.500 1.500-1 1z" fill="#d87272"/>
<path d="M520.300 515.600l.5-1.300.9.900z" fill="#111"/>
</svg>
<svg class="a" style="left:726px;top:468px" width="46" height="52" viewBox="726 468 46 52">
<defs><radialGradient id="gy" cx=".45" cy=".25" r=".8"><stop offset="0" stop-color="#5cf05a"/><stop offset=".55" stop-color="#2fc532"/><stop offset="1" stop-color="#1d8f22"/></radialGradient>
<linearGradient id="gb" x1="0" y1="0" x2="1" y2="0"><stop offset="0" stop-color="#4fd04f"/><stop offset=".75" stop-color="#3cbf3e"/><stop offset=".8" stop-color="#25922a"/><stop offset="1" stop-color="#1f8424"/></linearGradient></defs>
<ellipse cx="742" cy="512.500" rx="8" ry="2.600" fill="#cfcfcc" opacity=".8"/>
<path d="M740 494.500l4-2.500 6 3 6-3.500 4.500 3 .8 14-3 3.500h-14l-4.300-3.500z" fill="#e9e1b4"/>
<path d="M756 491.500l4.500 3 .8 14-3 3.500-1.800-10z" fill="#d2c88e"/>
<path d="M743.500 492.500l6.500 7 6.500-7.500-6 2.500z" fill="#6f6238"/>
<path d="M743 477.300c-4 1.700-8.500 3-13.300 3 3 4.300 7.500 7.800 13.800 9.500z" fill="#22a428"/><path d="M742.500 479.500c-3.500 1.300-7 2-10.500 2" stroke="#56dc58" stroke-width="1" fill="none" opacity=".7"/>
<path d="M756 476.800c4 1.500 8 2 12.200 1.500-2 4.700-6 8.800-12.400 11.200z" fill="#1f9a25"/><path d="M757 479c3.500 1 6.500 1.200 9.500.8" stroke="#56dc58" stroke-width="1" fill="none" opacity=".6"/>
<path d="M749.300 471.200c5.500 0 9 4 9 9.500 0 4-1.600 7-3.800 9.600l-4.700 4.500-5-4.500c-2.500-2.600-4.300-5.600-4.300-9.600 0-5.500 3.400-9.500 8.800-9.500z" fill="url(#gy)"/>
<path d="M744 475.500c1-2 3-3 5-3M746 477.500c1-1.500 2.500-2.300 4-2.400M752.500 476c1 .3 2 1 2.600 2" stroke="#9cf59a" stroke-width=".8" fill="none" opacity=".8"/>
<path d="M743.300 483.600l4 1.400M755.800 483.400l-4 1.600" stroke="#0f4a15" stroke-width="1.500"/>
<path d="M744 485.800l3 .6M755 485.700l-3 .7" stroke="#7a6a4a" stroke-width=".6"/>
<path d="M747.300 490.300q2.200.9 4.400 0" stroke="#17701d" stroke-width=".7" fill="none"/>
<path d="M746.500 503.500v-2.300h5.500v2.300" fill="none" stroke="#2c9a30" stroke-width="1"/>
<path d="M743.600 503.600l12-.8.400 12-12 .9z" fill="url(#gb)"/>
<path d="M745.300 505.600l6.600-.4.300 7.200-6.700.5z" fill="#e6f6e2"/>
<path d="M746.600 506.800l4.200 4.600M750.700 506.500l-4 5.200" stroke="#2f9a33" stroke-width="1.100"/>
</svg>
</div>
<div class="grp" id="annotations">
<svg class="a" style="left:0;top:0" width="839" height="550" viewBox="0 0 839 550"><polygon points="740.0,29.8 380.8,24.2 384.2,19.7 369.8,27.3 384.0,35.1 380.8,30.6" fill="#ff0000"/><polygon points="251.6,60.3 152.9,165.4 152.0,159.9 147.3,176.5 163.3,170.0 157.7,169.7" fill="#ff0000"/><polygon points="100.4,204.5 99.8,305.8 95.5,302.4 103.4,316.7 110.5,302.0 106.4,305.6" fill="#ff0000"/><polygon points="272.3,371.5 278.0,402.5 272.8,400.3 284.1,412.7 287.2,396.2 283.8,400.8" fill="#ff0000"/><polygon points="565.5,433.3 593.5,436.4 591.7,441.4 606.5,433.4 591.7,425.4 593.5,430.4" fill="#ff0000"/><rect x="742.5" y="2.8" width="81.8" height="23" fill="none" stroke="#ff0000" stroke-width="2"/><rect x="243" y="27" width="109" height="24.6" fill="none" stroke="#ff0000" stroke-width="2"/><rect x="105.15" y="319.95" width="165.3" height="42.4" fill="none" stroke="#ff0000" stroke-width="2.3"/><rect x="284.1" y="418.2" width="277.8" height="27.6" fill="none" stroke="#ff0000" stroke-width="2.4"/><rect x="611.2" y="416.1" width="151.7" height="31.8" fill="none" stroke="#ff0000" stroke-width="2.2"/></svg>
</div>
</body></html>
